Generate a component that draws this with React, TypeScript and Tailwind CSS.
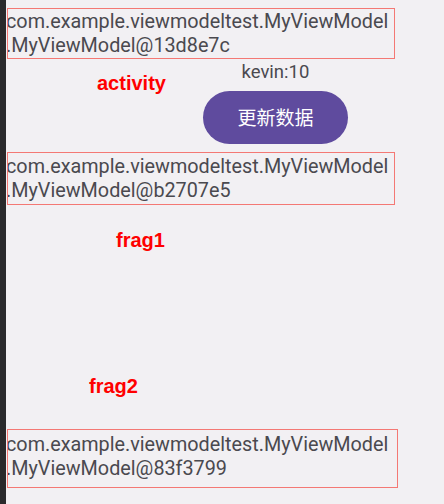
import React from "react";

function InfoBox({ id, className }: { id: string; className: string }) {
  return (
    <div className={`ml-[1px] border border-solid border-[#f47874] overflow-hidden ${className}`}>
      <div className="ml-[-2px] whitespace-nowrap text-[19.8px] leading-[24px] text-[#4a494f] font-['Roboto',sans-serif]">
        <div>com.example.viewmodeltest.MyViewModel</div>
        <div>.MyViewModel@{id}</div>
      </div>
    </div>
  );
}

export default function App() {
  return (
    <div className="w-[444px] h-[504px] bg-[#f2f0f3] flex overflow-hidden">
      <div className="w-[6px] h-full bg-[#2a2a2c] shrink-0" />
      <div className="flex-1 flex flex-col">
        <InfoBox id="13d8e7c" className="mt-[8px] w-[388px] h-[51px] pt-[1px]" />
        <div className="flex">
          <div className="ml-[91px] mt-[14px] text-[20px] font-bold text-[#ff0000] font-['Liberation_Sans',sans-serif] leading-none">
            activity
          </div>
          <div className="ml-[37px] flex flex-col items-center">
            <div className="mt-[2px] text-[18.5px] leading-[22px] text-[#4a494f] font-['Roboto',sans-serif]">kevin:10</div>
            <button className="mt-[8px] w-[145px] h-[53px] rounded-full bg-[#5f4b9e] text-white text-[19px] font-['Noto_Sans_CJK_SC',sans-serif]">
              更新数据
            </button>
          </div>
        </div>
        <InfoBox id="b2707e5" className="mt-[8px] w-[388px] h-[53px] pt-[2px]" />
        <div className="ml-[110px] mt-[25px] text-[20px] font-bold text-[#ff0000] font-['Liberation_Sans',sans-serif] leading-none">
          frag1
        </div>
        <div className="ml-[83px] mt-[126px] text-[20px] font-bold text-[#ff0000] font-['Liberation_Sans',sans-serif] leading-none">
          frag2
        </div>
        <InfoBox id="83f3799" className="mt-[33px] w-[391px] h-[59px] pt-[3px]" />
      </div>
    </div>
  );
}
